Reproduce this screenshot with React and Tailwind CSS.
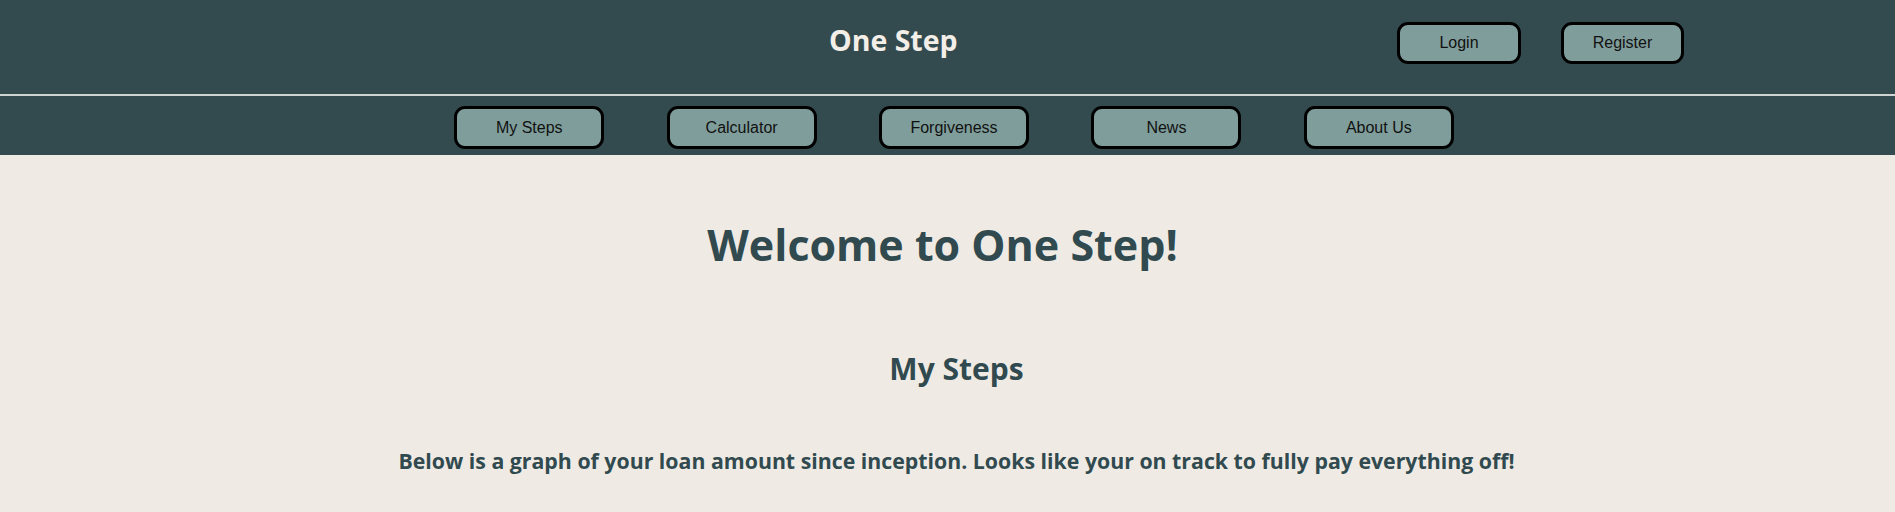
export default function App() {
  const navItems = ["My Steps", "Calculator", "Forgiveness", "News", "About Us"];
  const btn =
    "flex items-center justify-center rounded-[11px] border-[3px] border-black bg-[#7f9e9b] text-[16px] text-[#111] leading-none";
  const arial = { fontFamily: '"Liberation Sans", Arial, sans-serif' };
  const sans = { fontFamily: '"Open Sans", "Noto Sans", sans-serif' };
  return (
    <div className="min-h-[512px] w-full bg-[#efebe4]">
      <header className="flex h-[94px] w-full items-start bg-[#334b4f] pl-[829px] pr-[211px]">
        <h1 className="mt-[26px] text-[28.5px] font-bold leading-none text-[#f3efe8]" style={sans}>
          One Step
        </h1>
        <div className="ml-auto mt-[22px] flex gap-[40px]" style={arial}>
          <button className={`${btn} h-[42px] w-[124px]`}>Login</button>
          <button className={`${btn} h-[42px] w-[123px]`}>Register</button>
        </div>
      </header>
      <div className="h-[2px] w-full bg-[#cfd3d2]" />
      <nav className="flex w-full justify-center gap-[62.4px] bg-[#334b4f] pb-[6px] pl-[13px] pt-[10px]" style={arial}>
        {navItems.map((n) => (
          <button key={n} className={`${btn} h-[43px] w-[150px]`}>
            {n}
          </button>
        ))}
      </nav>
      <main className="flex flex-col items-center text-[#314a4f]" style={sans}>
        <h2 className="mt-[68px] pr-[10px] text-[43px] font-bold leading-none">Welcome to One Step!</h2>
        <h3 className="mt-[88px] pl-[18px] text-[30px] font-bold leading-none">My Steps</h3>
        <p className="mt-[66px] pl-[18px] text-[21.3px] font-bold leading-none">
          Below is a graph of your loan amount since inception. Looks like your on track to fully pay everything off!
        </p>
      </main>
    </div>
  );
}
